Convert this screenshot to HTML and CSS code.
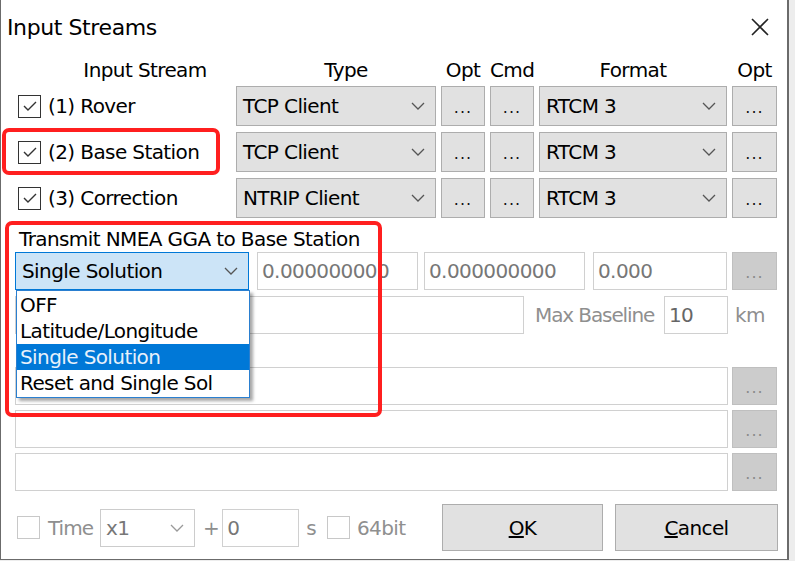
FILE: index.html
```html
<!DOCTYPE html>
<html>
<head>
<meta charset="utf-8">
<link rel="stylesheet" href="styles.css">
</head>
<body>
<div class="dialog">
  <div class="titlebar">
    <span class="title">Input Streams</span>
    <svg class="close" width="20" height="20" viewBox="0 0 20 20"><path d="M2 2 L18 18 M18 2 L2 18" stroke="#222" stroke-width="1.6" fill="none"/></svg>
  </div>
  <div class="content">
    <div class="grid header">
      <div class="hcell hc-stream">Input Stream</div>
      <div class="hcell hc-type">Type</div>
      <div class="hcell">Opt</div>
      <div class="hcell">Cmd</div>
      <div class="hcell">Format</div>
      <div class="hcell">Opt</div>
    </div>

    <div class="grid stream">
      <label class="chk"><span class="box"><svg width="16" height="12" viewBox="0 0 16 12"><path d="M2 6 L6 10 L14 2" stroke="#333" stroke-width="1.4" fill="none"/></svg></span>(1) Rover</label>
      <div class="combo">TCP Client<svg class="chev" width="14" height="8" viewBox="0 0 14 8"><path d="M1 1 L7 7 L13 1" stroke="#555" stroke-width="1.3" fill="none"/></svg></div>
      <div class="btn">...</div>
      <div class="btn">...</div>
      <div class="combo">RTCM 3<svg class="chev" width="14" height="8" viewBox="0 0 14 8"><path d="M1 1 L7 7 L13 1" stroke="#555" stroke-width="1.3" fill="none"/></svg></div>
      <div class="btn">...</div>
    </div>

    <div class="grid stream">
      <label class="chk"><span class="box"><svg width="16" height="12" viewBox="0 0 16 12"><path d="M2 6 L6 10 L14 2" stroke="#333" stroke-width="1.4" fill="none"/></svg></span>(2) Base Station</label>
      <div class="combo">TCP Client<svg class="chev" width="14" height="8" viewBox="0 0 14 8"><path d="M1 1 L7 7 L13 1" stroke="#555" stroke-width="1.3" fill="none"/></svg></div>
      <div class="btn">...</div>
      <div class="btn">...</div>
      <div class="combo">RTCM 3<svg class="chev" width="14" height="8" viewBox="0 0 14 8"><path d="M1 1 L7 7 L13 1" stroke="#555" stroke-width="1.3" fill="none"/></svg></div>
      <div class="btn">...</div>
    </div>

    <div class="grid stream">
      <label class="chk"><span class="box"><svg width="16" height="12" viewBox="0 0 16 12"><path d="M2 6 L6 10 L14 2" stroke="#333" stroke-width="1.4" fill="none"/></svg></span>(3) Correction</label>
      <div class="combo">NTRIP Client<svg class="chev" width="14" height="8" viewBox="0 0 14 8"><path d="M1 1 L7 7 L13 1" stroke="#555" stroke-width="1.3" fill="none"/></svg></div>
      <div class="btn">...</div>
      <div class="btn">...</div>
      <div class="combo">RTCM 3<svg class="chev" width="14" height="8" viewBox="0 0 14 8"><path d="M1 1 L7 7 L13 1" stroke="#555" stroke-width="1.3" fill="none"/></svg></div>
      <div class="btn">...</div>
    </div>

    <div class="gga-label">Transmit NMEA GGA to Base Station</div>

    <div class="row gga">
      <div class="combo sel">Single Solution<svg class="chev" width="14" height="8" viewBox="0 0 14 8"><path d="M1 1 L7 7 L13 1" stroke="#555" stroke-width="1.3" fill="none"/></svg></div>
      <div class="field f-lat">0.000000000</div>
      <div class="field f-lon">0.000000000</div>
      <div class="field f-hgt">0.000</div>
      <div class="btn dis">...</div>
    </div>

    <div class="row base">
      <div class="field f-wide"></div>
      <span class="dlabel ml-base">Max Baseline</span>
      <div class="field f-10">10</div>
      <span class="dlabel ml-km">km</span>
    </div>

    <div class="row path first">
      <div class="field f-path"></div>
      <div class="btn dis">...</div>
    </div>
    <div class="row path">
      <div class="field f-path"></div>
      <div class="btn dis">...</div>
    </div>
    <div class="row path">
      <div class="field f-path"></div>
      <div class="btn dis">...</div>
    </div>

    <div class="row bottom">
      <span class="box dbox"></span>
      <span class="dlabel ml-time">Time</span>
      <div class="combo dcombo">x1<svg class="chev" width="14" height="8" viewBox="0 0 14 8"><path d="M1 1 L7 7 L13 1" stroke="#999" stroke-width="1.3" fill="none"/></svg></div>
      <span class="dlabel ml-plus">+</span>
      <div class="field f-time">0</div>
      <span class="dlabel ml-s">s</span>
      <span class="box dbox ml-64"></span>
      <span class="dlabel ml-bit">64bit</span>
      <div class="pbtn ok"><u>O</u>K</div>
      <div class="pbtn cancel"><u>C</u>ancel</div>
    </div>
  </div>

  <div class="droplist">
    <div class="item">OFF</div>
    <div class="item">Latitude/Longitude</div>
    <div class="item hl">Single Solution</div>
    <div class="item">Reset and Single Sol</div>
  </div>

  <div class="mark mark1"></div>
  <div class="mark mark2"></div>
</div>
</body>
</html>
```
FILE: styles.css
```css
* { box-sizing: border-box; }
html, body { margin: 0; padding: 0; }
body {
  background: #ededed;
  width: 795px;
  height: 561px;
  overflow: hidden;
  font-family: "DejaVu Sans", Verdana, sans-serif;
  font-size: 20px;
  letter-spacing: -0.6px;
  color: #000;
}
.dialog {
  position: relative;
  width: 789px;
  height: 560px;
  background: #fff;
  border-left: 1px solid #6b6b6b;
  border-right: 2px solid #6b6b6b;
  border-bottom: 1px solid #6b6b6b;
}
.titlebar {
  height: 54px;
  display: flex;
  align-items: center;
  justify-content: space-between;
  padding: 0 17px 0 6px;
}
.title { font-size: 22px; letter-spacing: -0.4px; }
.content {
  padding-left: 14px;
  width: 777px;
  display: flex;
  flex-direction: column;
}
.grid {
  display: grid;
  grid-template-columns: 216px 200px 44px 44px 188px 45px;
  column-gap: 5px;
}
.header { height: 32px; align-items: center; }
.hcell { text-align: center; }
.hc-stream { padding-left: 44px; }
.hc-type { padding-left: 20px; }
.stream { height: 40px; margin-bottom: 6px; }
.chk {
  display: flex;
  align-items: center;
  gap: 7px;
  padding-left: 3px;
}
.box {
  width: 23px;
  height: 23px;
  border: 1px solid #333;
  background: #fff;
  display: flex;
  align-items: center;
  justify-content: center;
  flex: none;
}
.combo {
  position: relative;
  background: #e1e1e1;
  border: 1px solid #adadad;
  display: flex;
  align-items: center;
  padding-left: 6px;
}
.chev { position: absolute; right: 10px; top: 50%; margin-top: -4px; }
.btn {
  background: #e1e1e1;
  border: 1px solid #adadad;
  display: flex;
  align-items: center;
  justify-content: center;
  font-size: 16px;
  letter-spacing: 1px;
  padding-top: 2px;
  color: #111;
}
.btn.dis { background: #cccccc; border-color: #bfbfbf; color: #8a8a8a; }
.gga-label { height: 28px; padding-left: 4px; padding-top: 3px; }
.row { display: flex; align-items: stretch; height: 38px; }
.gga .combo { width: 234px; }
.combo.sel { background: #cce4f7; border-color: #0078d7; }
.field {
  border: 1px solid #d0d0d0;
  background: #fff;
  color: #777;
  display: flex;
  align-items: center;
  padding-left: 4px;
}
.f-lat { width: 161px; margin-left: 8px; }
.f-lon { width: 161px; margin-left: 6px; }
.f-hgt { width: 134px; margin-left: 8px; }
.gga .btn { width: 45px; margin-left: 5px; }
.base { margin-top: 6px; align-items: center; }
.base .field { align-self: stretch; }
.f-wide { width: 509px; }
.dlabel { color: #8f8f8f; }
.ml-base { width: 119px; margin-left: 11px; letter-spacing: -1.1px; white-space: nowrap; }
.f-10 { width: 64px; margin-left: 10px; color: #666; }
.ml-km { margin-left: 7px; }
.path { margin-top: 5px; }
.path.first { margin-top: 33px; }
.f-path { width: 713px; }
.path .btn { width: 45px; margin-left: 4px; }
.bottom { height: 47px; margin-top: 13px; align-items: center; }
.dbox { border-color: #c8c8c8; margin-left: 2px; }
.ml-time { margin-left: 8px; letter-spacing: -1px; }
.dcombo {
  width: 95px;
  height: 38px;
  margin-left: 7px;
  background: #fff;
  border-color: #cccccc;
  color: #777;
  padding-left: 5px;
}
.ml-plus { margin-left: 8px; }
.f-time { width: 77px; height: 38px; margin-left: 3px; }
.ml-s { margin-left: 7px; }
.ml-64 { margin-left: 11px; }
.ml-bit { margin-left: 7px; }
.pbtn {
  height: 47px;
  background: #e1e1e1;
  border: 1px solid #adadad;
  display: flex;
  align-items: center;
  justify-content: center;
}
.ok { width: 161px; margin-left: auto; }
.cancel { width: 163px; margin-left: 12px; }
.droplist {
  position: absolute;
  left: 15px;
  top: 290px;
  width: 234px;
  background: #fff;
  border: 1px solid #2a7fd0;
  box-shadow: 3px 3px 3px rgba(0,0,0,0.35);
  padding: 1px 0;
}
.item { height: 26px; line-height: 26px; padding-left: 3px; }
.item.hl { background: #0078d7; color: #e8f1fb; }
.mark {
  position: absolute;
  border: 4px solid #ff1f1f;
  border-radius: 7px;
}
.mark1 { left: 1px; top: 128px; width: 218px; height: 47px; }
.mark2 { left: 4px; top: 221px; width: 377px; height: 196px; }
```
